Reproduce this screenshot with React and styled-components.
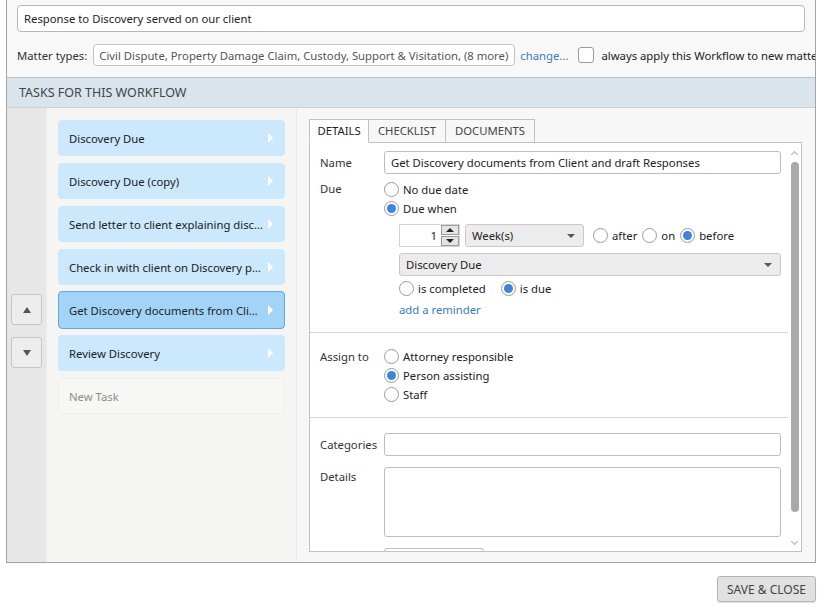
import React from "react";
import styled, { createGlobalStyle } from "styled-components";

const GlobalStyle = createGlobalStyle`
  html, body {
    margin: 0;
    padding: 0;
    background: #ffffff;
  }
  body {
    font-family: "Noto Sans", "Open Sans", sans-serif;
    font-size: 11.3px;
    color: #222;
  }
  * {
    box-sizing: border-box;
  }
`;

// Outer frame

const Page = styled.div`
  width: 826px;
  height: 610px;
  overflow: hidden;
`;

const Frame = styled.div`
  margin-left: 6px;
  width: 810px;
  height: 563px;
  border: 1px solid #a2a2a2;
  border-top: none;
  display: flex;
  flex-direction: column;
  overflow: hidden;
  background: #f8f8f8;
`;

const Top = styled.div`
  padding: 5px 10px 0 10px;
  height: 77px;
  display: flex;
  flex-direction: column;
  gap: 12px;
`;

const TextBox = styled.div`
  height: 27px;
  border: 1px solid #b9b9b9;
  border-radius: 4px;
  background: #fff;
  padding: 0 6px;
  display: flex;
  align-items: center;
  color: #222;
  white-space: nowrap;
  overflow: hidden;
`;

const MatterRow = styled.div`
  display: flex;
  align-items: center;
  white-space: nowrap;
  height: 22px;
`;

const MatterLabel = styled.span`
  color: #333;
  margin-right: 6px;
`;

const MatterBox = styled.div`
  width: 422px;
  height: 22px;
  border: 1px solid #c4c4c4;
  border-radius: 4px;
  background: #fff;
  color: #555;
  padding: 0 5px;
  display: flex;
  align-items: center;
  flex-shrink: 0;
  overflow: hidden;
`;

const Link = styled.span`
  color: #3b7bc4;
  margin-left: ${(p) => p.$ml || 0}px;
`;

const CheckBox = styled.span`
  width: 16px;
  height: 16px;
  border: 1px solid #9a9a9a;
  border-radius: 3px;
  background: #fff;
  margin: 0 7px 0 10px;
  flex-shrink: 0;
`;

const Header = styled.div`
  height: 31px;
  border-top: 1px solid #b8c2ca;
  border-bottom: 1px solid #c9d2d9;
  background: #d9e4ec;
  color: #444;
  font-size: 12.5px;
  padding-left: 12px;
  display: flex;
  align-items: center;
`;

const Body = styled.div`
  flex: 1;
  display: flex;
  min-height: 0;
`;

// Left side: ordering buttons

const Mover = styled.div`
  width: 40px;
  background: #e7e7e7;
  display: flex;
  flex-direction: column;
  justify-content: center;
  align-items: center;
  gap: 12px;
  padding-bottom: 8px;
  border-right: 1px solid #ececec;
`;

const MoveButton = styled.div`
  width: 31px;
  height: 31px;
  border: 1px solid #c6c6c6;
  border-radius: 3px;
  background: #ededed;
  display: flex;
  align-items: center;
  justify-content: center;
  &::after {
    content: "";
    border-left: 4px solid transparent;
    border-right: 4px solid transparent;
    ${(p) => (p.$down ? "border-top" : "border-bottom")}: 6px solid #555;
  }
`;

// Task list

const TaskList = styled.div`
  width: 250px;
  background: #f5f5f3;
  padding: 12px 11px 0 11px;
  display: flex;
  flex-direction: column;
  gap: 7px;
  border-right: 1px solid #ececea;
`;

const Task = styled.div`
  height: 36px;
  border-radius: 4px;
  padding: 0 10px;
  display: flex;
  align-items: center;
  justify-content: space-between;
  white-space: nowrap;
  background: ${(p) => (p.$selected ? "#a2d4f7" : p.$empty ? "#f7f7f5" : "#cbe8fc")};
  border: 1px solid ${(p) => (p.$selected ? "#62a6dc" : p.$empty ? "#efefed" : "#cbe8fc")};
  color: ${(p) => (p.$empty ? "#8d8d8d" : "#222")};
  ${(p) => p.$selected && "height: 38px; margin: -1px 0;"}
`;

const TaskText = styled.span`
  overflow: hidden;
  text-overflow: ellipsis;
`;

const Arrow = styled.span`
  flex-shrink: 0;
  margin-left: 4px;
  margin-right: 1px;
  border-top: 5px solid transparent;
  border-bottom: 5px solid transparent;
  border-left: 5px solid #fff;
`;

// Detail pane

const Detail = styled.div`
  flex: 1;
  padding: 11px 13px 10px 12px;
  display: flex;
  flex-direction: column;
  background: #f7f7f7;
`;

const Tabs = styled.div`
  display: flex;
  height: 23px;
`;

const Tab = styled.div`
  width: ${(p) => p.$w}px;
  border: 1px solid #c2c2c2;
  border-left: ${(p) => (p.$first ? "1px solid #c2c2c2" : "none")};
  border-bottom: ${(p) => (p.$active ? "1px solid #fff" : "1px solid #c2c2c2")};
  background: ${(p) => (p.$active ? "#fff" : "#f7f7f7")};
  color: ${(p) => (p.$active ? "#222" : "#444")};
  display: flex;
  align-items: center;
  justify-content: center;
  padding-bottom: 1px;
  margin-bottom: -1px;
  position: relative;
  z-index: 1;
`;

const Sheet = styled.div`
  flex: 1;
  border: 1px solid #c2c2c2;
  background: #fff;
  display: flex;
  min-height: 0;
  overflow: hidden;
`;

const Form = styled.div`
  flex: 1;
  display: flex;
  flex-direction: column;
`;

const Section = styled.div`
  padding: ${(p) => p.$pad};
  border-bottom: ${(p) => (p.$line ? "1px solid #d6d6d6" : "none")};
  display: flex;
  flex-direction: column;
  gap: ${(p) => p.$gap || 0}px;
`;

const Row = styled.div`
  display: flex;
  align-items: ${(p) => p.$align || "flex-start"};
  margin-top: ${(p) => p.$mt || 0}px;
`;

const Label = styled.div`
  width: 74px;
  padding-left: 10px;
  flex-shrink: 0;
  color: #333;
  padding-top: ${(p) => p.$top || 0}px;
  white-space: nowrap;
`;

const Field = styled.div`
  flex: 1;
  display: flex;
  flex-direction: column;
  padding-right: 7px;
`;

const Input = styled.div`
  height: ${(p) => p.$h || 23}px;
  width: ${(p) => (p.$w ? p.$w + "px" : "auto")};
  border: 1px solid #bdbdbd;
  border-radius: 3px;
  background: #fff;
  padding: 0 6px;
  display: flex;
  align-items: center;
  white-space: nowrap;
`;

const Options = styled.div`
  display: flex;
  flex-direction: column;
  margin-left: ${(p) => p.$indent || 0}px;
`;

const OptionRow = styled.div`
  display: flex;
  align-items: center;
  gap: ${(p) => p.$gap || 0}px;
  margin: ${(p) => p.$m || 0};
`;

const RadioLabel = styled.label`
  display: flex;
  align-items: center;
  height: 19px;
  white-space: nowrap;
  color: #222;
`;

const RadioDot = styled.span`
  width: 15px;
  height: 15px;
  border-radius: 50%;
  border: 1px solid #9a9a9a;
  background: #fff;
  margin-right: 4px;
  display: flex;
  align-items: center;
  justify-content: center;
  flex-shrink: 0;
  &::after {
    content: "";
    width: 9px;
    height: 9px;
    border-radius: 50%;
    background: ${(p) => (p.$on ? "#3d85dc" : "transparent")};
  }
`;

const Radio = ({ on, children }) => (
  <RadioLabel>
    <RadioDot $on={on} />
    {children}
  </RadioLabel>
);

const Spinner = styled.div`
  width: 61px;
  height: 23px;
  display: flex;
  border: 1px solid #d4d4d4;
  background: #fff;
`;

const SpinValue = styled.div`
  flex: 1;
  display: flex;
  align-items: center;
  justify-content: flex-end;
  padding-right: 4px;
`;

const SpinButtons = styled.div`
  width: 18px;
  display: flex;
  flex-direction: column;
  gap: 1px;
`;

const SpinButton = styled.div`
  flex: 1;
  border: 1px solid #9c9c9c;
  background: #e4e4e4;
  display: flex;
  align-items: center;
  justify-content: center;
  &::after {
    content: "";
    border-left: 4px solid transparent;
    border-right: 4px solid transparent;
    ${(p) => (p.$down ? "border-top" : "border-bottom")}: 4px solid #222;
  }
`;

const Select = styled.div`
  height: 23px;
  width: ${(p) => (p.$w ? p.$w + "px" : "auto")};
  flex: ${(p) => (p.$w ? "none" : 1)};
  border: 1px solid #c9c9c9;
  border-radius: 3px;
  background: #ececec;
  padding: 0 6px;
  display: flex;
  align-items: center;
  justify-content: space-between;
  white-space: nowrap;
  &::after {
    content: "";
    border-left: 4px solid transparent;
    border-right: 4px solid transparent;
    border-top: 4px solid #555;
    margin-right: 2px;
  }
`;

const Scrollbar = styled.div`
  width: 13px;
  display: flex;
  flex-direction: column;
  align-items: center;
  padding: 4px 0 2px 0;
  background: #fff;
`;

const ScrollArrow = styled.div`
  width: 5px;
  height: 5px;
  border-left: 1px solid #b0b0b0;
  border-top: 1px solid #b0b0b0;
  transform: rotate(${(p) => (p.$down ? "225deg" : "45deg")});
  margin: ${(p) => (p.$down ? "0 0 5px 0" : "5px 0 0 0")};
`;

const ScrollThumb = styled.div`
  width: 8px;
  height: 350px;
  border-radius: 4px;
  background: #a9a9a9;
  margin-top: 5px;
`;

const Spacer = styled.div`
  flex: 1;
`;

const Footer = styled.div`
  display: flex;
  justify-content: flex-end;
  padding: 13px 10px 0 0;
`;

const SaveButton = styled.button`
  height: 26px;
  width: 99px;
  padding: 0;
  border: 1px solid #b4b4b4;
  border-radius: 3px;
  background: #e1e1e1;
  color: #444;
  font-family: "Noto Sans", "Open Sans", sans-serif;
  font-size: 12px;
  box-shadow: 0 1px 1px rgba(0, 0, 0, 0.12);
`;

const tasks = [
  { name: "Discovery Due" },
  { name: "Discovery Due (copy)" },
  { name: "Send letter to client explaining discovery process" },
  { name: "Check in with client on Discovery progress" },
  { name: "Get Discovery documents from Client and draft Responses", selected: true },
  { name: "Review Discovery" },
];

const App = () => {
  return (
    <Page>
      <GlobalStyle />
      <Frame>
        <Top>
          <TextBox>Response to Discovery served on our client</TextBox>
          <MatterRow>
            <MatterLabel>Matter types:</MatterLabel>
            <MatterBox>
              Civil Dispute, Property Damage Claim, Custody, Support &amp; Visitation, (8 more)
            </MatterBox>
            <Link $ml={5}>change...</Link>
            <CheckBox />
            <span>always apply this Workflow to new matters</span>
          </MatterRow>
        </Top>
        <Header>TASKS FOR THIS WORKFLOW</Header>
        <Body>
          <Mover>
            <MoveButton />
            <MoveButton $down />
          </Mover>
          <TaskList>
            {tasks.map((t) => (
              <Task key={t.name} $selected={t.selected}>
                <TaskText>{t.name}</TaskText>
                <Arrow />
              </Task>
            ))}
            <Task $empty>New Task</Task>
          </TaskList>
          <Detail>
            <Tabs>
              <Tab $first $active $w={60}>DETAILS</Tab>
              <Tab $w={77}>CHECKLIST</Tab>
              <Tab $w={89}>DOCUMENTS</Tab>
            </Tabs>
            <Sheet>
              <Form>
                <Section $pad="8px 0 15px 0" $line>
                  <Row $align="center">
                    <Label>Name</Label>
                    <Field>
                      <Input>Get Discovery documents from Client and draft Responses</Input>
                    </Field>
                  </Row>
                  <Row $mt={6}>
                    <Label $top={1}>Due</Label>
                    <Field>
                      <Options>
                        <Radio>No due date</Radio>
                        <Radio on>Due when</Radio>
                      </Options>
                      <Options $indent={15}>
                        <OptionRow $gap={5} $m="6px 0 0 0">
                          <Spinner>
                            <SpinValue>1</SpinValue>
                            <SpinButtons>
                              <SpinButton />
                              <SpinButton $down />
                            </SpinButtons>
                          </Spinner>
                          <Select $w={119}>Week(s)</Select>
                          <OptionRow $gap={5} $m="0 0 0 4px">
                            <Radio>after</Radio>
                            <Radio>on</Radio>
                            <Radio on>before</Radio>
                          </OptionRow>
                        </OptionRow>
                        <OptionRow $m="6px 0 0 0">
                          <Select>Discovery Due</Select>
                        </OptionRow>
                        <OptionRow $gap={15} $m="3px 0 0 0">
                          <Radio>is completed</Radio>
                          <Radio on>is due</Radio>
                        </OptionRow>
                        <OptionRow $m="4px 0 0 0">
                          <Link>add a reminder</Link>
                        </OptionRow>
                      </Options>
                    </Field>
                  </Row>
                </Section>
                <Section $pad="14px 0 13px 0" $line>
                  <Row>
                    <Label $top={2}>Assign to</Label>
                    <Field>
                      <Options>
                        <Radio>Attorney responsible</Radio>
                        <Radio on>Person assisting</Radio>
                        <Radio>Staff</Radio>
                      </Options>
                    </Field>
                  </Row>
                </Section>
                <Section $pad="15px 0 0 0" $gap={11}>
                  <Row $align="center">
                    <Label>Categories</Label>
                    <Field>
                      <Input />
                    </Field>
                  </Row>
                  <Row>
                    <Label $top={2}>Details</Label>
                    <Field>
                      <Input $h={70} />
                    </Field>
                  </Row>
                  <Row>
                    <Label />
                    <Field>
                      <Input $w={100} />
                    </Field>
                  </Row>
                </Section>
              </Form>
              <Scrollbar>
                <ScrollArrow />
                <ScrollThumb />
                <Spacer />
                <ScrollArrow $down />
              </Scrollbar>
            </Sheet>
          </Detail>
        </Body>
      </Frame>
      <Footer>
        <SaveButton>SAVE &amp; CLOSE</SaveButton>
      </Footer>
    </Page>
  );
};

export default App;
